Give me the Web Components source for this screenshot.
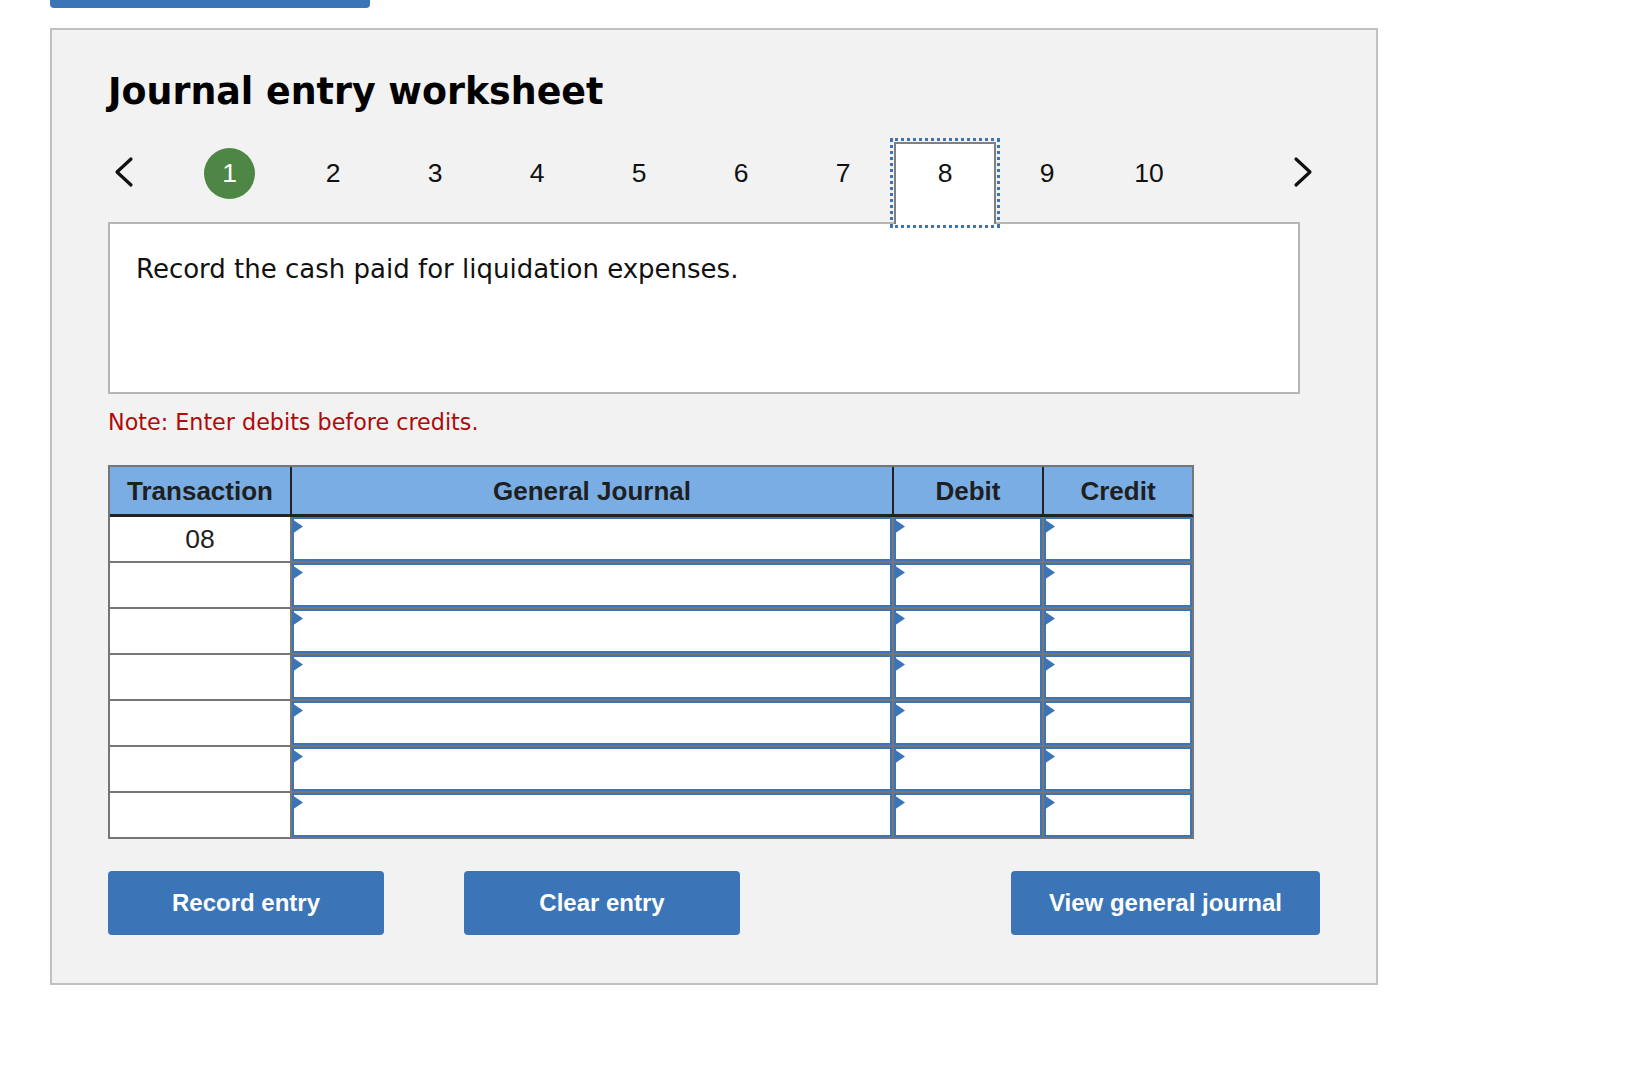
<!DOCTYPE html>
<html>
<head>
<meta charset="utf-8">
<title>Journal entry worksheet</title>
<style>
  html, body { margin: 0; padding: 0; background: #fff; }
  body { font-family: "Liberation Sans", Arial, sans-serif; padding-left: 50px; }
</style>
</head>
<body>
<top-stub></top-stub>
<worksheet-panel heading="Journal entry worksheet">
  <step-nav slot="top" current="8" count="10"></step-nav>
  <prompt-box slot="top">Record the cash paid for liquidation expenses.</prompt-box>
  <span slot="note">Note: Enter debits before credits.</span>
  <entry-table slot="bottom" rows="7" first="08"></entry-table>
  <action-button slot="actions" style="width:276px">Record entry</action-button>
  <action-button slot="actions" style="width:276px;margin-left:80px">Clear entry</action-button>
  <action-button slot="actions" style="width:309px;margin-left:auto">View general journal</action-button>
</worksheet-panel>

<script>
class TopStub extends HTMLElement {
  constructor() {
    super();
    this.attachShadow({ mode: "open" }).innerHTML = `
      <style>
        :host { display: block; width: 320px; height: 8px; margin-bottom: 20px;
          background: #3b75b7; border-radius: 0 0 4px 4px; }
      </style>`;
  }
}

class WorksheetPanel extends HTMLElement {
  constructor() {
    super();
    this.attachShadow({ mode: "open" }).innerHTML = `
      <style>
        :host { display: block; box-sizing: border-box; width: 1328px; height: 957px;
          background: #f2f2f2; border: 2px solid #c0c0c0; padding: 0 56px; }
        h1 { margin: 0; padding-top: 38px; height: 74px;
          font: bold 36.4px/48px "DejaVu Sans", Verdana, sans-serif; color: #000; }
        .note { margin-top: 13px; height: 30px; font: 22.25px/30px "DejaVu Sans", Verdana, sans-serif; color: #b00a0a; }
        .actions { display: flex; margin-top: 32px; width: 1212px; }
      </style>
      <h1></h1>
      <slot name="top"></slot>
      <div class="note"><slot name="note"></slot></div>
      <slot name="bottom"></slot>
      <div class="actions"><slot name="actions"></slot></div>`;
    this.shadowRoot.querySelector("h1").textContent = this.getAttribute("heading");
  }
}

class StepNav extends HTMLElement {
  constructor() {
    super();
    this.attachShadow({ mode: "open" }).innerHTML = `
      <style>
        :host { display: flex; align-items: stretch; position: relative; z-index: 1; height: 82px;
          font: 26.5px/1 "Liberation Sans", Arial, sans-serif; color: #111; }
        .arrow { width: 72px; flex: none; box-sizing: border-box; padding: 0 0 22px 3px; display: flex; align-items: center; }
        .arrow svg { width: 24px; height: 32px; flex: none; display: block; }
        .next { margin-left: auto; width: 28px; padding-left: 0; }
        .step { width: 102px; flex: none; display: flex; align-items: center; justify-content: center; box-sizing: border-box; padding-bottom: 20px; }
        .step.done span { width: 51px; height: 51px; margin-left: -3px; border-radius: 50%; background: #4e8646; color: #fff;
          display: flex; align-items: center; justify-content: center; }
        .step.current { background: #fff; border: 2px solid #808080; border-bottom: none;
          outline: 3px dotted #3b75b7; outline-offset: 1px; padding-bottom: 22px; }
      </style>
      <div class="arrow"><svg viewBox="0 0 24 32"><path d="M20 3 L6 16 L20 29" fill="none" stroke="#111" stroke-width="3.2" stroke-linecap="round" stroke-linejoin="round"/></svg></div>
      <div class="steps" style="display:contents"></div>
      <div class="arrow next"><svg viewBox="0 0 24 32"><path d="M4 3 L18 16 L4 29" fill="none" stroke="#111" stroke-width="3.2" stroke-linecap="round" stroke-linejoin="round"/></svg></div>`;
    const steps = this.shadowRoot.querySelector(".steps");
    const count = +this.getAttribute("count");
    const current = +this.getAttribute("current");
    for (let i = 1; i <= count; i++) {
      const d = document.createElement("div");
      d.className = "step" + (i === 1 ? " done" : "") + (i === current ? " current" : "");
      d.innerHTML = `<span>${i}</span>`;
      steps.appendChild(d);
    }
  }
}

class PromptBox extends HTMLElement {
  constructor() {
    super();
    this.attachShadow({ mode: "open" }).innerHTML = `
      <style>
        :host { display: block; box-sizing: border-box; width: 1192px; height: 172px; margin-top: -2px;
          background: #fff; border: 2px solid #b5b5b5; padding: 28px 26px;
          font: 26px/34px "DejaVu Sans", Verdana, sans-serif; color: #111; }
      </style>
      <slot></slot>`;
  }
}

class EntryTable extends HTMLElement {
  constructor() {
    super();
    const rows = +this.getAttribute("rows");
    const first = this.getAttribute("first");
    let cells = "";
    for (let r = 0; r < rows; r++) {
      cells += `<div class="tx">${r === 0 ? first : ""}</div>`;
      for (let c = 0; c < 3; c++) cells += `<div class="cell"><div class="input"></div></div>`;
    }
    this.attachShadow({ mode: "open" }).innerHTML = `
      <style>
        :host { display: block; width: 1086px; margin-top: 28px; }
        .grid { display: grid; grid-template-columns: 182px 602px 150px 150px; grid-template-rows: 50px; grid-auto-rows: 46px;
          border: solid #767676; border-width: 2px 0 0 2px; font-family: "Liberation Sans", Arial, sans-serif; color: #1f1f1f; }
        .head { box-sizing: border-box; background: #79ade4; border-right: 2px solid #222; border-bottom: 3px solid #222; padding-top: 1px;
          display: flex; align-items: center; justify-content: center; font-weight: bold; font-size: 26px; }
        .head.end { border-right-color: #767676; }
        .tx { background: #fff; box-sizing: border-box; border-right: 2px solid #767676; border-bottom: 2px solid #767676;
          display: flex; align-items: center; justify-content: center; font-size: 26.5px; }
        .cell { box-sizing: border-box; border-right: 2px solid #767676; border-bottom: 2px solid #767676; position: relative; }
        .input { box-sizing: border-box; height: 100%; background: #fff; border: 2px solid #3b75b7; }
        .cell::after { content: ""; position: absolute; left: 0; top: 2px; width: 11px; height: 15px;
          background: #3b75b7; clip-path: polygon(0 0, 100% 50%, 0 100%); }
      </style>
      <div class="grid">
        <div class="head">Transaction</div>
        <div class="head">General Journal</div>
        <div class="head">Debit</div>
        <div class="head end">Credit</div>
        ${cells}
      </div>`;
  }
}

class ActionButton extends HTMLElement {
  constructor() {
    super();
    this.attachShadow({ mode: "open" }).innerHTML = `
      <style>
        :host { display: flex; align-items: center; justify-content: center; box-sizing: border-box; height: 64px;
          background: #3b75b7; border-radius: 4px; color: #fff; font: bold 24px/1 "Liberation Sans", Arial, sans-serif; }
      </style>
      <slot></slot>`;
  }
}

customElements.define("top-stub", TopStub);
customElements.define("step-nav", StepNav);
customElements.define("prompt-box", PromptBox);
customElements.define("entry-table", EntryTable);
customElements.define("action-button", ActionButton);
customElements.define("worksheet-panel", WorksheetPanel);
</script>
</body>
</html>
